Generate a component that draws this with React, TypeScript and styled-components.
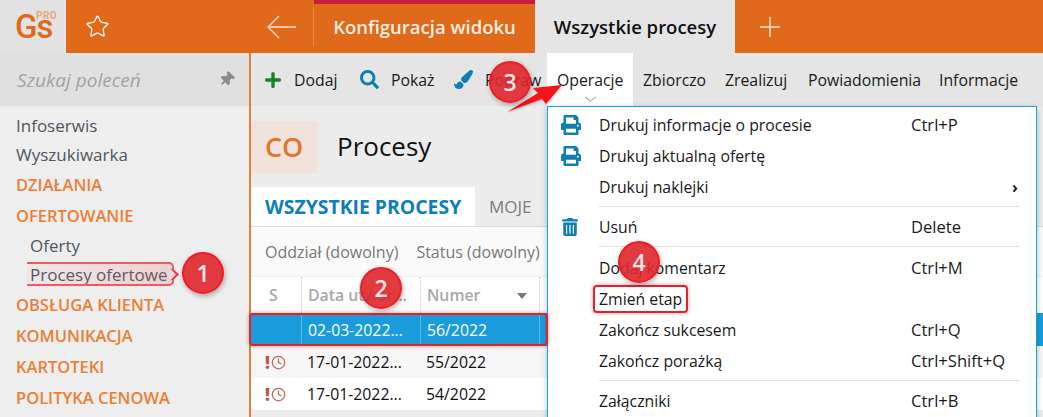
import styled, {createGlobalStyle} from 'styled-components';
import {FaPlus, FaSearch, FaPaintBrush, FaPrint, FaTrashAlt, FaThumbtack} from 'react-icons/fa';
import {Star, Clock} from 'lucide-react';

const GlobalStyle = createGlobalStyle`
  html, body { margin: 0; padding: 0; background: #ececec; }
  * { box-sizing: border-box; }
  body { font-family: "Open Sans", "Noto Sans", "Liberation Sans", sans-serif; }
`;

const Page = styled.div`
  position: relative;
  width: 1043px;
  height: 417px;
  overflow: hidden;
  font-size: 15px;
`;

/* top orange bar */
const TopBar = styled.header`
  display: flex;
  height: 53px;
  background: #e0691a;
  color: #fff;
`;
const Logo = styled.div`
  position: relative;
  width: 66px;
  background: #e2e2e2;
  color: #e0691a;
  font-family: "Roboto", sans-serif;
  font-weight: 500;
  font-size: 33px;
  line-height: 53px;
  padding-left: 15px;
  letter-spacing: -1px;
  span {
    position: absolute;
    left: 36px;
    top: 10px;
    font-size: 10px;
    line-height: 12px;
    font-weight: 700;
    letter-spacing: 0.5px;
    color: #eba67a;
  }
`;
const StarButton = styled.div`
  width: 198px;
  padding-left: 19px;
  display: flex;
  align-items: center;
`;
const BackButton = styled.div`
  width: 50px;
  height: 39px;
  margin-top: 7px;
  padding-left: 3px;
  border-right: 1px solid #e88a4c;
  display: flex;
  align-items: center;
`;
const Tab = styled.div`
  display: flex;
  align-items: center;
  justify-content: center;
  font-size: 18.5px;
  font-weight: 600;
  white-space: nowrap;
`;
const ConfigTab = styled(Tab)`
  width: 221px;
  border-top: 4px solid #c8203c;
  padding-bottom: 4px;
  color: #fdeee3;
`;
const ActiveTab = styled(Tab)`
  width: 200px;
  background: #e5e5e5;
  color: #111;
`;
const AddTab = styled.div`
  padding-left: 24px;
  display: flex;
  align-items: center;
`;

const Body = styled.div`
  display: flex;
  height: 364px;
`;

/* left menu */
const Sidebar = styled.aside`
  width: 251px;
  flex: none;
  background: #eeeeee;
  border-right: 2px solid #e0813f;
`;
const SearchBox = styled.div`
  height: 53px;
  background: #e0e0e0;
  display: flex;
  align-items: center;
  justify-content: space-between;
  padding: 0 15px 0 17px;
  color: #a3a3a3;
  font-style: italic;
  font-size: 19px;
  svg { color: #8a8a8a; transform: rotate(45deg); }
`;
const NavList = styled.nav`
  padding: 6px 0 0 16px;
`;
const NavItem = styled.div<{$sub?: boolean}>`
  height: 29px;
  line-height: 28px;
  padding-left: ${p => (p.$sub ? 14 : 0)}px;
  color: #4f5661;
  font-size: 17px;
`;
const NavGroup = styled.div`
  height: 31px;
  line-height: 30px;
  color: #ec7f35;
  font-size: 16.5px;
  font-weight: 600;
  white-space: nowrap;
`;

/* main column */
const Main = styled.main`
  flex: 1;
  min-width: 0;
  display: flex;
  flex-direction: column;
`;
const Toolbar = styled.div`
  height: 53px;
  flex: none;
  background: #e5e5e5;
  display: flex;
  align-items: stretch;
  padding-left: 13px;
  color: #1a1a1a;
  font-size: 15.8px;
`;
const ToolItem = styled.div<{$open?: boolean; $w: number; $text?: boolean}>`
  width: ${p => p.$w}px;
  flex: none;
  display: flex;
  align-items: center;
  gap: 12px;
  white-space: nowrap;
  ${p => p.$text && 'padding-left: 10px;'}
  ${p => p.$open && 'background: #fff;'}
  svg { flex: none; }
`;
const Heading = styled.div`
  height: 82px;
  flex: none;
  background: #ececec;
  padding-top: 15px;
  display: flex;
  align-items: flex-start;
  gap: 19px;
`;
const Code = styled.div`
  width: 67px;
  height: 52px;
  background: #f1e3dc;
  color: #e0762a;
  font-size: 27px;
  font-weight: 600;
  line-height: 51px;
  padding-left: 14px;
`;
const Title = styled.h1`
  margin: 0;
  font-size: 26px;
  line-height: 50px;
  font-weight: 400;
  color: #111;
`;
const TabStrip = styled.div`
  height: 40px;
  flex: none;
  display: flex;
  margin-top: -1px;
  border-bottom: 1px solid #dcdcdc;
`;
const ListTab = styled.div<{$active?: boolean}>`
  display: flex;
  align-items: center;
  padding: 0 14px;
  white-space: nowrap;
  ${p => p.$active
    ? 'background:#fff; color:#0f7fb8; font-weight:700; width:224px; font-size:19.4px;'
    : 'color:#7c7c7c; font-weight:400; font-size:17px;'}
`;
const Filters = styled.div`
  height: 50px;
  flex: none;
  background: #fafafa;
  display: flex;
  align-items: center;
  gap: 18px;
  padding-left: 14px;
  color: #777;
  font-size: 16px;
  white-space: nowrap;
  border-bottom: 1px solid #f0f0f0;
`;
const Row = styled.div<{$bg: string; $h: number; $color?: string}>`
  height: ${p => p.$h}px;
  flex: none;
  background: ${p => p.$bg};
  color: ${p => p.$color || '#111'};
  display: grid;
  grid-template-columns: 50px 119px 119px 1fr;
  align-items: center;
  font-size: 15.8px;
`;
const Cell = styled.div<{$line?: string}>`
  height: 100%;
  display: flex;
  align-items: center;
  justify-content: space-between;
  padding: 0 6px;
  white-space: nowrap;
  border-left: 1px ${p => p.$line || 'none'};
`;
const HeadCell = styled(Cell)`
  color: #a8a8a8;
  font-weight: 600;
  font-size: 15.8px;
`;
const StateCell = styled(Cell)`
  padding: 0 0 0 14px;
  gap: 1px;
  justify-content: flex-start;
  color: #c5524d;
  font-weight: 800;
  font-size: 17px;
`;
const SortArrow = styled.i`
  border: 5px solid transparent;
  border-top: 6px solid #777;
  margin-top: 6px;
  margin-right: 6px;
`;

/* dropdown */
const Menu = styled.div`
  position: absolute;
  left: 547px;
  top: 106px;
  width: 490px;
  height: 330px;
  background: #fff;
  border: 1px solid #1ca0e0;
  padding-top: 2px;
  box-shadow: 0 2px 6px rgba(0, 0, 0, 0.25);
`;
const MenuRow = styled.div`
  height: 31px;
  display: grid;
  grid-template-columns: 51px 312px 1fr 16px;
  align-items: center;
  color: #1a1a1a;
  font-size: 15.8px;
  white-space: nowrap;
  padding-right: 8px;
  svg { margin-left: 13px; color: #0f7fb0; display: block; }
`;
const Shortcut = styled.span`
  font-size: 16.6px;
`;
const Separator = styled.div<{$after?: number}>`
  height: 1px;
  background: #e2e2e2;
  margin: 4px 16px ${p => p.$after ?? 4}px 51px;
`;
const Chevron = styled.span`
  grid-column: 4;
  font-weight: 700;
  font-size: 16px;
`;
const OpenChevron = styled.svg`
  position: absolute;
  left: 584px;
  top: 96px;
`;

/* red annotations on top of the screenshot */
const Badge = styled.div<{$x: number; $y: number}>`
  position: absolute;
  left: ${p => p.$x - 21}px;
  top: ${p => p.$y - 21}px;
  width: 42px;
  height: 42px;
  border-radius: 50%;
  background: rgba(222, 38, 44, 0.9);
  border: 2px solid #f01c22;
  color: #f7e6e6;
  font-weight: 600;
  font-size: 23px;
  display: flex;
  align-items: center;
  justify-content: center;
  box-shadow: 1px 2px 5px rgba(0, 0, 0, 0.3);
`;
const Outline = styled.div<{$x: number; $y: number; $w: number; $h: number}>`
  position: absolute;
  left: ${p => p.$x}px;
  top: ${p => p.$y}px;
  width: ${p => p.$w}px;
  height: ${p => p.$h}px;
  border: 2px solid #ee1c25;
  border-radius: 4px;
  box-shadow: 0 0 4px rgba(0, 0, 0, 0.35);
`;
const Callout = styled.div`
  position: absolute;
  left: 27px;
  top: 262px;
  width: 147px;
  height: 24px;
  border: solid #ee5a5f;
  border-width: 2px 2px 2px 0;
  border-radius: 0 5px 5px 0;
  background: linear-gradient(90deg, rgba(230, 90, 90, 0.04), rgba(230, 90, 90, 0.2));
  &::after {
    content: "";
    position: absolute;
    right: -5px;
    top: 6px;
    width: 7px;
    height: 7px;
    background: #eed8d8;
    border: solid #ee3b40;
    border-width: 2px 2px 0 0;
    transform: rotate(45deg);
  }
`;
const Pointer = styled.svg`
  position: absolute;
  left: 500px;
  top: 80px;
  filter: drop-shadow(1px 1px 1px rgba(0, 0, 0, 0.2));
`;

function AlertClock() {
  return (
    <>
      <span>!</span>
      <Clock size={15} strokeWidth={2} color="#c5605a"/>
    </>
  );
}

function App() {
  return (
    <Page>
      <GlobalStyle/>
      <TopBar>
        <Logo>Gs<span>PRO</span></Logo>
        <StarButton><Star size={25} strokeWidth={1.2}/></StarButton>
        <BackButton>
          <svg width="30" height="24" viewBox="0 0 30 24" fill="none" stroke="#fbe3d3" strokeWidth="1.3">
            <path d="M29 12H1M12 1 1 12l11 11"/>
          </svg>
        </BackButton>
        <ConfigTab>Konfiguracja widoku</ConfigTab>
        <ActiveTab>Wszystkie procesy</ActiveTab>
        <AddTab>
          <svg width="22" height="22" viewBox="0 0 22 22" fill="none" stroke="#fbe3d3" strokeWidth="1.4">
            <path d="M11 1v20M1 11h20"/>
          </svg>
        </AddTab>
      </TopBar>
      <Body>
        <Sidebar>
          <SearchBox>Szukaj poleceń<FaThumbtack size={15}/></SearchBox>
          <NavList>
            <NavItem>Infoserwis</NavItem>
            <NavItem>Wyszukiwarka</NavItem>
            <NavGroup>DZIAŁANIA</NavGroup>
            <NavGroup>OFERTOWANIE</NavGroup>
            <NavItem $sub>Oferty</NavItem>
            <NavItem $sub>Procesy ofertowe</NavItem>
            <NavGroup>OBSŁUGA KLIENTA</NavGroup>
            <NavGroup>KOMUNIKACJA</NavGroup>
            <NavGroup>KARTOTEKI</NavGroup>
            <NavGroup>POLITYKA CENOWA</NavGroup>
          </NavList>
        </Sidebar>
        <Main>
          <Toolbar>
            <ToolItem $w={96}><FaPlus size={18} color="#15831f"/>Dodaj</ToolItem>
            <ToolItem $w={94}><FaSearch size={19} color="#0f7fb0"/>Pokaż</ToolItem>
            <ToolItem $w={93}><FaPaintBrush size={19} color="#0f7fb0"/>Popraw</ToolItem>
            <ToolItem $w={86} $open $text>Operacje</ToolItem>
            <ToolItem $w={82} $text>Zbiorczo</ToolItem>
            <ToolItem $w={83} $text>Zrealizuj</ToolItem>
            <ToolItem $w={131} $text>Powiadomienia</ToolItem>
            <ToolItem $w={90} $text>Informacje</ToolItem>
          </Toolbar>
          <Heading>
            <Code>CO</Code>
            <Title>Procesy</Title>
          </Heading>
          <TabStrip>
            <ListTab $active>WSZYSTKIE PROCESY</ListTab>
            <ListTab>MOJE</ListTab>
          </TabStrip>
          <Filters>
            <span>Oddział (dowolny)</span>
            <span>Status (dowolny)</span>
          </Filters>
          <Row $bg="#fff" $h={36}>
            <HeadCell style={{paddingLeft: 18}}>S</HeadCell>
            <HeadCell $line="dotted #ccc">Data utwor...</HeadCell>
            <HeadCell $line="dotted #ccc">Numer<SortArrow/></HeadCell>
            <HeadCell $line="dotted #ccc"/>
          </Row>
          <Row $bg="#1a9cdc" $h={33} $color="#fff">
            <Cell/>
            <Cell $line="solid #5cb8e6">02-03-2022...</Cell>
            <Cell $line="solid #5cb8e6">56/2022</Cell>
            <Cell $line="solid #5cb8e6"/>
          </Row>
          <Row $bg="#f6f6f6" $h={32}>
            <StateCell><AlertClock/></StateCell>
            <Cell>17-01-2022...</Cell>
            <Cell>55/2022</Cell>
            <Cell/>
          </Row>
          <Row $bg="#fff" $h={32}>
            <StateCell><AlertClock/></StateCell>
            <Cell>17-01-2022...</Cell>
            <Cell>54/2022</Cell>
            <Cell/>
          </Row>
        </Main>
      </Body>

      <OpenChevron width="13" height="6" viewBox="0 0 13 6" fill="none" stroke="#999">
        <path d="M1 1l5.500 4L12 1"/>
      </OpenChevron>
      <Menu>
        <MenuRow><FaPrint size={20}/><span>Drukuj informacje o procesie</span><Shortcut>Ctrl+P</Shortcut></MenuRow>
        <MenuRow><FaPrint size={20}/><span>Drukuj aktualną ofertę</span></MenuRow>
        <MenuRow><i/><span>Drukuj naklejki</span><i/><Chevron>›</Chevron></MenuRow>
        <Separator/>
        <MenuRow><FaTrashAlt size={18}/><span>Usuń</span><Shortcut>Delete</Shortcut></MenuRow>
        <Separator $after={5}/>
        <MenuRow><i/><span>Dodaj komentarz</span><Shortcut>Ctrl+M</Shortcut></MenuRow>
        <MenuRow><i/><span>Zmień etap</span></MenuRow>
        <MenuRow><i/><span>Zakończ sukcesem</span><Shortcut>Ctrl+Q</Shortcut></MenuRow>
        <MenuRow><i/><span>Zakończ porażką</span><Shortcut>Ctrl+Shift+Q</Shortcut></MenuRow>
        <Separator/>
        <MenuRow><i/><span>Załączniki</span><Shortcut>Ctrl+B</Shortcut></MenuRow>
      </Menu>

      <Callout/>
      <Outline $x={249} $y={313} $w={299} $h={33}/>
      <Outline $x={593} $y={285} $w={95} $h={28}/>
      <Pointer width="70" height="40" viewBox="0 0 70 40">
        <path d="M7 32 38 13 33 8 62 5 46 24 42 19Z" fill="#f5141c"/>
      </Pointer>
      <Badge $x={203} $y={273}>1</Badge>
      <Badge $x={381} $y={288}>2</Badge>
      <Badge $x={510} $y={82}>3</Badge>
      <Badge $x={639} $y={262}>4</Badge>
    </Page>
  );
}

export default App;
